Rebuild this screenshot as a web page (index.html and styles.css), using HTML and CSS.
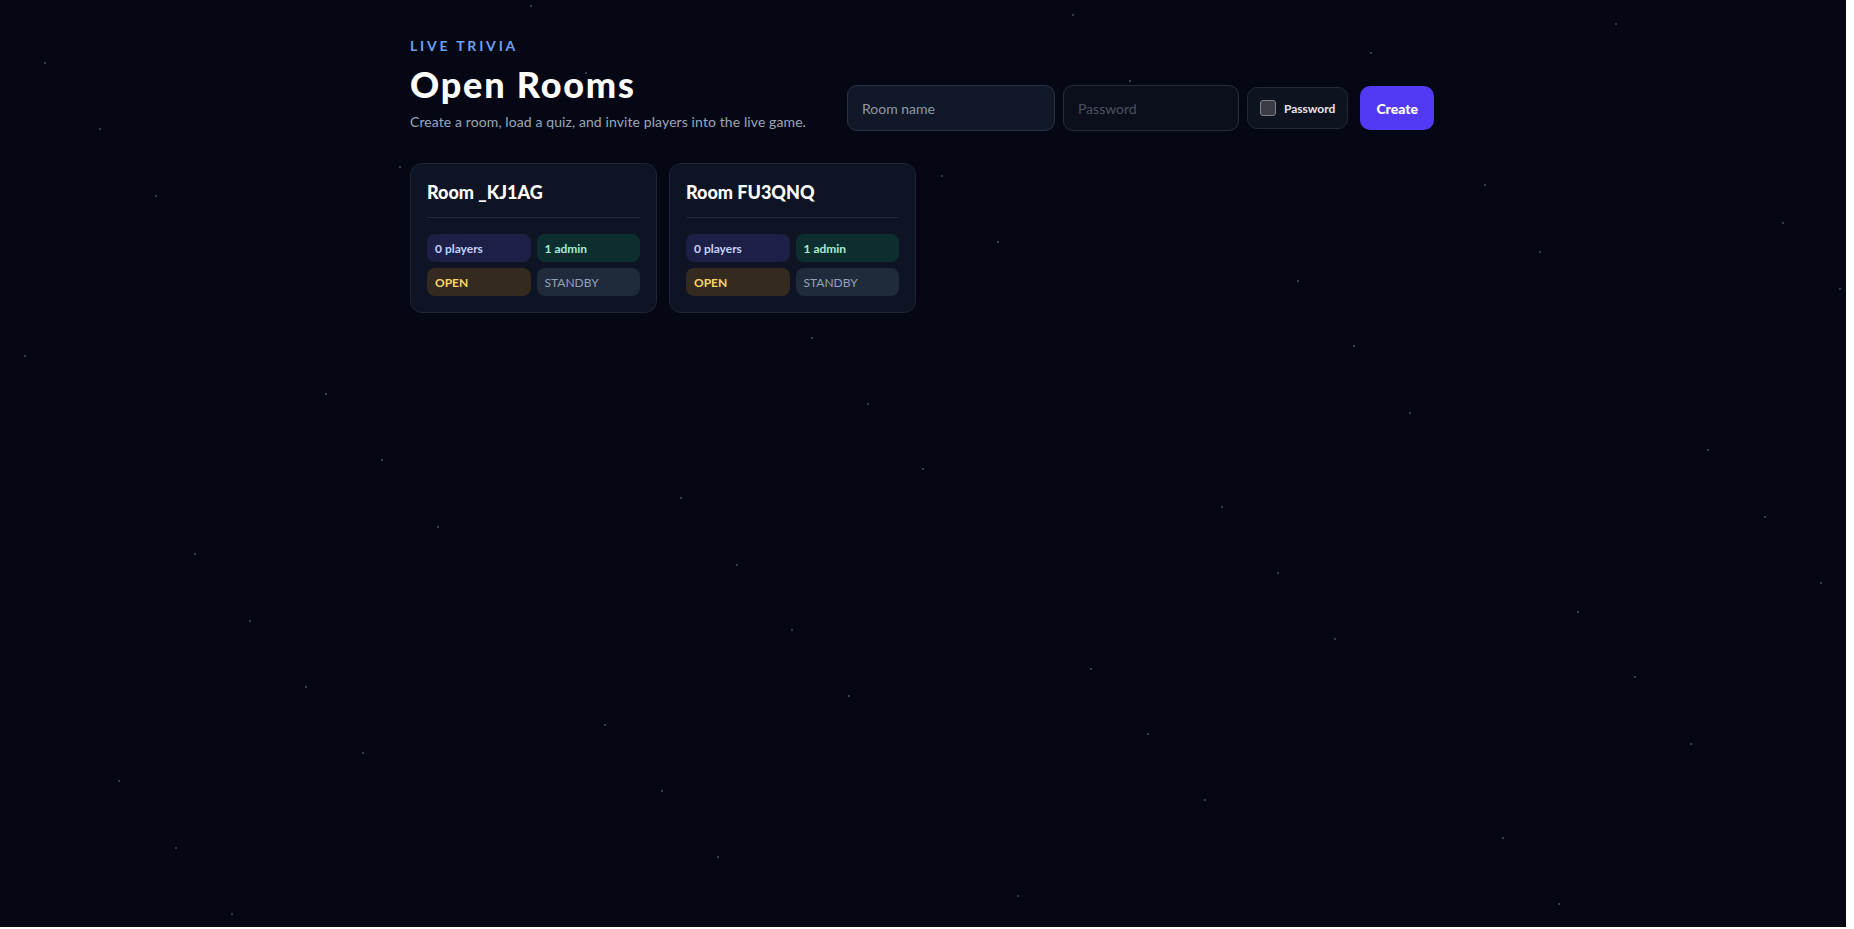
FILE: index.html
```html
<!DOCTYPE html>
<html lang="en">
<head>
<meta charset="utf-8">
<title>Open Rooms</title>
<link rel="stylesheet" href="styles.css">
</head>
<body>
<div class="page">
  <svg class="stars" width="1846" height="927" aria-hidden="true">
    <g fill="#363b4c">
      <rect x="530" y="5" width="2" height="2"/><rect x="1072" y="14" width="2" height="2"/>
      <rect x="1615" y="23" width="2" height="2"/><rect x="1370" y="52" width="2" height="2"/>
      <rect x="44" y="62" width="2" height="2"/><rect x="585" y="72" width="2" height="2"/>
      <rect x="1129" y="80" width="2" height="2"/><rect x="99" y="128" width="2" height="2"/>
      <rect x="155" y="195" width="2" height="2"/><rect x="399" y="166" width="2" height="2"/>
      <rect x="455" y="232" width="2" height="2"/><rect x="511" y="299" width="2" height="2"/>
      <rect x="941" y="175" width="2" height="2"/><rect x="1484" y="184" width="2" height="2"/>
      <rect x="1782" y="222" width="2" height="2"/><rect x="997" y="241" width="2" height="2"/>
      <rect x="1539" y="251" width="2" height="2"/><rect x="1297" y="280" width="2" height="2"/>
      <rect x="1839" y="288" width="2" height="2"/><rect x="811" y="337" width="2" height="2"/>
      <rect x="1353" y="345" width="2" height="2"/><rect x="24" y="355" width="2" height="2"/>
      <rect x="325" y="393" width="2" height="2"/><rect x="867" y="403" width="2" height="2"/>
      <rect x="1409" y="412" width="2" height="2"/><rect x="1707" y="449" width="2" height="2"/>
      <rect x="381" y="459" width="2" height="2"/><rect x="922" y="468" width="2" height="2"/>
      <rect x="680" y="497" width="2" height="2"/><rect x="1221" y="506" width="2" height="2"/>
      <rect x="1764" y="516" width="2" height="2"/><rect x="437" y="526" width="2" height="2"/>
      <rect x="194" y="553" width="2" height="2"/><rect x="736" y="564" width="2" height="2"/>
      <rect x="1277" y="572" width="2" height="2"/><rect x="1820" y="582" width="2" height="2"/>
      <rect x="1577" y="611" width="2" height="2"/><rect x="249" y="620" width="2" height="2"/>
      <rect x="791" y="629" width="2" height="2"/><rect x="1334" y="638" width="2" height="2"/>
      <rect x="1090" y="668" width="2" height="2"/><rect x="1634" y="676" width="2" height="2"/>
      <rect x="305" y="686" width="2" height="2"/><rect x="848" y="695" width="2" height="2"/>
      <rect x="604" y="724" width="2" height="2"/><rect x="1147" y="733" width="2" height="2"/>
      <rect x="1690" y="743" width="2" height="2"/><rect x="362" y="752" width="2" height="2"/>
      <rect x="118" y="780" width="2" height="2"/><rect x="661" y="790" width="2" height="2"/>
      <rect x="1204" y="799" width="2" height="2"/><rect x="1502" y="837" width="2" height="2"/>
      <rect x="175" y="847" width="2" height="2"/><rect x="717" y="856" width="2" height="2"/>
      <rect x="1017" y="895" width="2" height="2"/><rect x="1558" y="903" width="2" height="2"/>
      <rect x="231" y="913" width="2" height="2"/>
    </g>
  </svg>

  <main class="container">
    <header class="head">
      <div class="intro">
        <p class="eyebrow">LIVE TRIVIA</p>
        <h1 class="title">Open Rooms</h1>
        <p class="sub">Create a room, load a quiz, and invite players into the live game.</p>
      </div>
      <form class="create" onsubmit="return false">
        <input class="field field-name" type="text" placeholder="Room name">
        <input class="field field-pass" type="password" placeholder="Password" disabled>
        <label class="toggle"><input class="check" type="checkbox"><span>Password</span></label>
        <button class="btn" type="submit">Create</button>
      </form>
    </header>

    <section class="rooms">
      <article class="card">
        <h2 class="card-title">Room _KJ1AG</h2>
        <div class="pills">
          <span class="pill pill-players">0 players</span>
          <span class="pill pill-admin">1 admin</span>
          <span class="pill pill-open">OPEN</span>
          <span class="pill pill-standby">STANDBY</span>
        </div>
      </article>
      <article class="card">
        <h2 class="card-title">Room FU3QNQ</h2>
        <div class="pills">
          <span class="pill pill-players">0 players</span>
          <span class="pill pill-admin">1 admin</span>
          <span class="pill pill-open">OPEN</span>
          <span class="pill pill-standby">STANDBY</span>
        </div>
      </article>
    </section>
  </main>
</div>
</body>
</html>
```

FILE: styles.css
```css
* { box-sizing: border-box; }

html { background: #ffffff; }

body {
  margin: 0;
  font-family: "Lato", "Noto Sans", sans-serif;
  color: #f8fafc;
}

.page {
  position: relative;
  width: calc(100vw - 8px);
  height: calc(100vh - 2px);
  padding-right: 2px;
  background: #050814;
  overflow: hidden;
}

.stars {
  position: absolute;
  left: 0;
  top: 0;
  z-index: 0;
}

.container {
  position: relative;
  z-index: 1;
  max-width: 1024px;
  margin: 0 auto;
  padding-top: 36px;
}

.head {
  display: flex;
  justify-content: space-between;
  align-items: flex-end;
}

.eyebrow {
  margin: 0;
  font-size: 14px;
  line-height: 20px;
  font-weight: 700;
  letter-spacing: 0.2em;
  color: #6f9ff2;
}

.title {
  margin: 8px 0 0;
  font-size: 36px;
  line-height: 40px;
  font-weight: 900;
  color: #ffffff;
  letter-spacing: 0.05em;
}

.sub {
  margin: 8px 0 0;
  font-size: 14px;
  line-height: 20px;
  letter-spacing: 0.1px;
  color: #9ba6b9;
}

.create {
  display: flex;
  align-items: center;
  gap: 8px;
  margin-bottom: 1px;
}

.field {
  height: 46px;
  border-radius: 10px;
  border: 1px solid #2a3243;
  padding: 0 14px;
  font-family: inherit;
  font-size: 14px;
  color: #e5e7eb;
  outline: none;
}

.field-name {
  width: 208px;
  background: #111827;
}
.field-name::placeholder { color: #8e98a9; }

.field-pass {
  width: 176px;
  background: #0a0f1b;
  border-color: #262e3e;
}
.field-pass::placeholder { color: #4a5162; }

.toggle {
  display: flex;
  align-items: center;
  gap: 8px;
  height: 42px;
  padding: 0 12px;
  border-radius: 10px;
  border: 1px solid #222a39;
  background: #0e1320;
  font-size: 12px;
  font-weight: 700;
  color: #e2e8f0;
}

.check {
  appearance: none;
  -webkit-appearance: none;
  margin: 0;
  width: 16px;
  height: 16px;
  border-radius: 3px;
  border: 1px solid #7c818c;
  background: #3a3c43;
}

.btn {
  margin-left: 4px;
  height: 44px;
  padding: 0 16px;
  border: 0;
  border-radius: 10px;
  background: #5139f6;
  color: #ffffff;
  font-family: inherit;
  font-size: 14px;
  font-weight: 900;
}

.rooms {
  display: grid;
  grid-template-columns: repeat(4, 1fr);
  gap: 12px;
  margin-top: 31px;
}

.card {
  border: 1px solid #1e2535;
  border-radius: 12px;
  background: rgba(16, 22, 37, 0.88);
  padding: 16px;
}

.card-title {
  margin: 0 0 16px;
  padding-bottom: 13px;
  border-bottom: 1px solid #1f2738;
  font-size: 18px;
  line-height: 24px;
  font-weight: 900;
  color: #ffffff;
}

.pills {
  display: grid;
  grid-template-columns: 1fr 1fr;
  gap: 6px;
}

.pill {
  display: flex;
  align-items: center;
  height: 28px;
  padding: 0 8px;
  border-radius: 8px;
  font-size: 12px;
  font-weight: 700;
}

.pill-players { background: #1c2047; color: #c5d1fb; }
.pill-admin   { background: #0c2e2f; color: #a5ecd2; }
.pill-open    { background: #352a20; color: #fcd56a; }
.pill-standby { background: #1f2a3b; color: #95a2b6; font-weight: 400; }
```
